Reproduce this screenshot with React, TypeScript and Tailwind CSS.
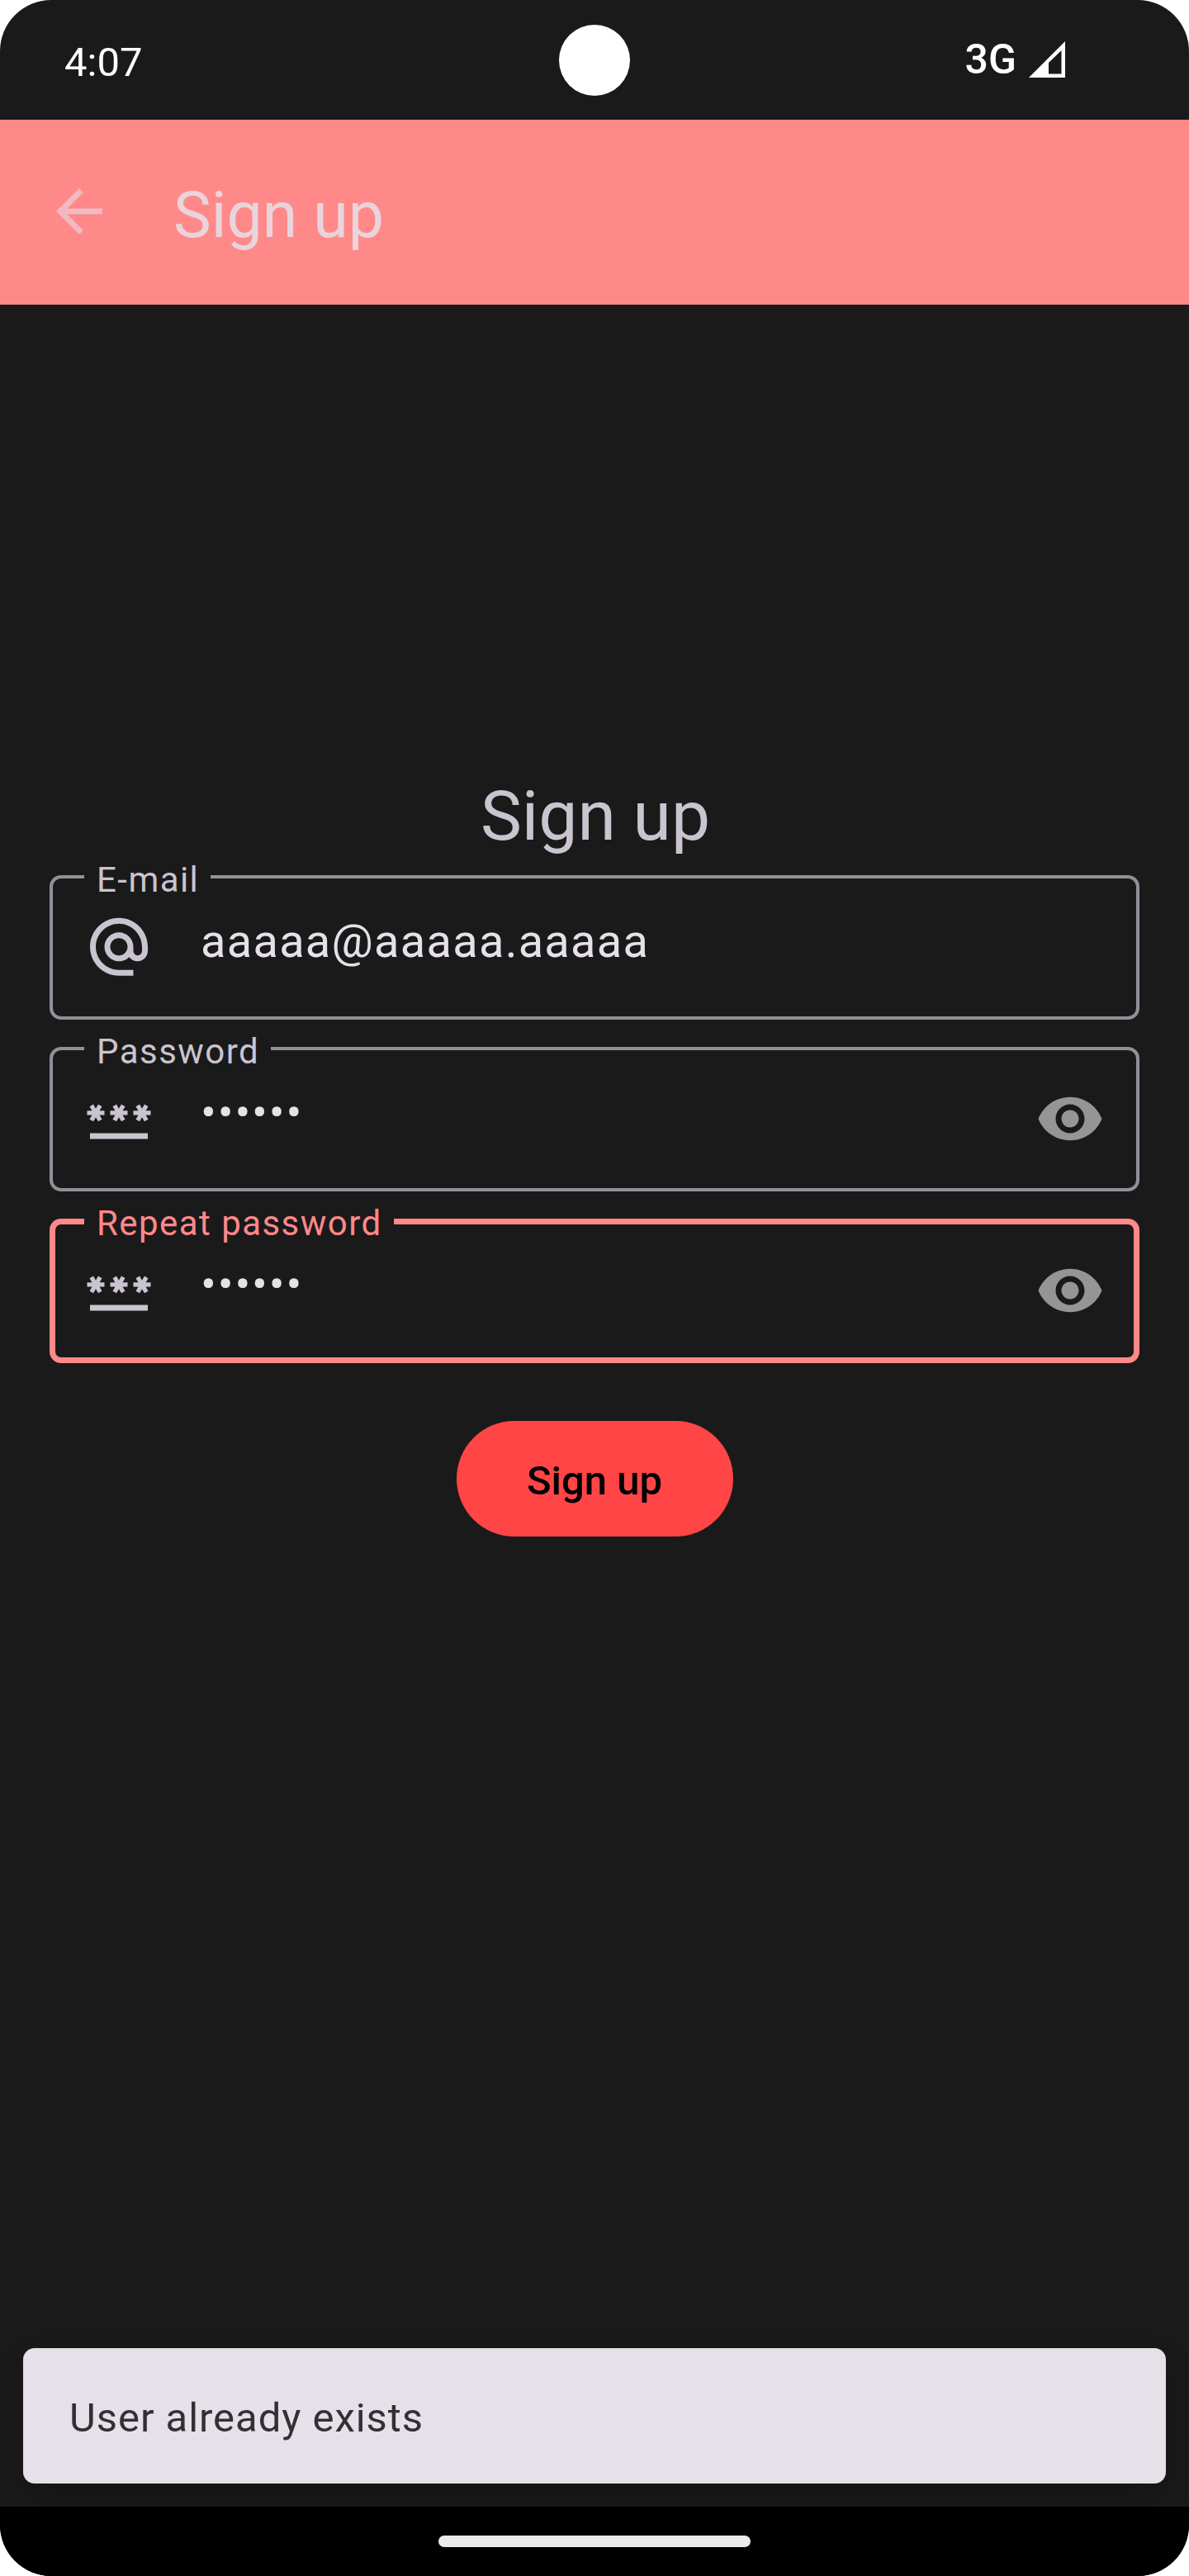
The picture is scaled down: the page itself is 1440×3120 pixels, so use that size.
import React from "react";

const AT_PATH =
  "M12 1.95c-5.52 0-10 4.48-10 10s4.48 10 10 10h5v-2h-5c-4.34 0-8-3.66-8-8s3.66-8 8-8 8 3.66 8 8v1.43c0 .79-.71 1.57-1.5 1.57s-1.5-.78-1.5-1.57v-1.43c0-2.76-2.24-5-5-5s-5 2.24-5 5 2.24 5 5 5c1.38 0 2.64-.56 3.54-1.47.65.89 1.77 1.47 2.96 1.47 1.97 0 3.5-1.6 3.5-3.57v-1.43c0-5.52-4.48-10-10-10zm0 13c-1.66 0-3-1.34-3-3s1.34-3 3-3 3 1.34 3 3-1.34 3-3 3z";
const PASSWORD_PATH =
  "M2 17h20v2H2v-2zm1.15-4.05L4 11.47l.85 1.48 1.3-.75-.85-1.48H7v-1.5H5.3l.85-1.47L4.85 7 4 8.47 3.15 7l-1.3.75.85 1.47H1v1.5h1.7l-.85 1.48 1.3.75zm6.7-.75 1.3.75.85-1.48.85 1.48 1.3-.75-.85-1.48H15v-1.5h-1.7l.85-1.47-1.3-.75L12 8.47 11.15 7l-1.3.75.85 1.47H9v1.5h1.7l-.85 1.48zM23 9.22h-1.7l.85-1.47-1.3-.75L20 8.47 19.15 7l-1.3.75.85 1.47H17v1.5h1.7l-.85 1.48 1.3.75.85-1.48.85 1.48 1.3-.75-.85-1.48H23v-1.5z";
const EYE_PATH =
  "M12 4.5C7 4.5 2.73 7.61 1 12c1.73 4.39 6 7.5 11 7.5s9.27-3.11 11-7.5c-1.73-4.39-6-7.5-11-7.5zM12 17c-2.76 0-5-2.24-5-5s2.24-5 5-5 5 2.24 5 5-2.24 5-5 5zm0-8c-1.66 0-3 1.34-3 3s1.34 3 3 3 3-1.34 3-3-1.34-3-3-3z";
const BACK_PATH = "M20 11H7.83l5.59-5.59L12 4l-8 8 8 8 1.41-1.41L7.83 13H20v-2z";

function Icon({ path, className }: { path: string; className: string }) {
  return (
    <svg viewBox="0 0 24 24" fill="currentColor" className={`size-[84px] shrink-0 ${className}`}>
      <path d={path} />
    </svg>
  );
}

type FieldProps = {
  label: string;
  value: string;
  icon: string;
  secret?: boolean;
  focused?: boolean;
};

function Field({ label, value, icon, secret, focused }: FieldProps) {
  return (
    <div
      className={`relative flex h-[175px] w-full items-center rounded-[14px] px-[42px] ring-inset ${
        focused ? "ring-[7px] ring-[#ff8989]" : "ring-4 ring-[#938f99]"
      }`}
    >
      <span
        className={`absolute -top-[15px] left-[42px] bg-[#1a1a1a] pr-[14px] pl-[15px] text-[42px] leading-[42px] tracking-[1.45px] whitespace-nowrap ${
          focused ? "text-[#ff8989]" : "text-[#cac4d0]"
        }`}
      >
        {label}
      </span>
      <Icon path={icon} className="mb-px text-[#cac4d0]" />
      <span
        className={`mb-[16px] ml-[57px] grow text-[56px] leading-[84px] text-[#e6e0e9] ${
          secret ? "tracking-[1.8px]" : "tracking-[1.25px]"
        }`}
      >
        {value}
      </span>
      {secret && <Icon path={EYE_PATH} className="mb-px text-[#959595]" />}
    </div>
  );
}

export default function App() {
  return (
    <div className="h-[3120px] w-[1440px] bg-white font-['Roboto',sans-serif]">
      <div className="flex h-full flex-col overflow-hidden rounded-[62px] bg-[#1a1a1a]">
        <div className="grid h-[145px] shrink-0 grid-cols-3 items-center text-white">
          <span className="pt-[6px] pl-[78px] text-[49px] leading-[56px]">4:07</span>
          <span className="size-[86px] justify-self-center rounded-full bg-white" />
          <div className="flex items-center justify-end pr-[150px]">
            <span className="mb-[2px] text-[50px] leading-[56px] font-medium">3G</span>
            <svg viewBox="0 0 44 44" fill="#fff" className="mb-px ml-[15px] size-[44px]">
              <path fillRule="evenodd" d="M0 44 44 0V44ZM24 26V39.5H39.5V11Z" />
            </svg>
          </div>
        </div>

        <header className="flex h-[224px] shrink-0 items-center bg-[#ff8989] pl-[54px]">
          <Icon path={BACK_PATH} className="mb-[3px] text-[#f1b9c1]" />
          <h1 className="mt-[8px] ml-[72px] text-[77px] leading-[98px] text-[#e9d4dc]">Sign up</h1>
        </header>

        <main className="flex grow flex-col items-center px-[60px] pt-[571px]">
          <h2 className="pl-[2px] text-[84px] leading-[98px] text-[#cac4d0]">Sign up</h2>
          <div className="mt-[22px] flex w-full flex-col gap-[33px]">
            <Field label="E-mail" value="aaaaa@aaaaa.aaaaa" icon={AT_PATH} />
            <Field label="Password" value="••••••" icon={PASSWORD_PATH} secret />
            <Field label="Repeat password" value="••••••" icon={PASSWORD_PATH} secret focused />
          </div>
          <button className="mt-[70px] flex h-[140px] w-[335px] items-center justify-center rounded-full bg-[#ff4545] pt-[5px] text-[49px] leading-[70px] font-medium text-black">
            Sign up
          </button>
        </main>

        <div className="mx-[28px] mb-[28px] flex h-[164px] shrink-0 items-center rounded-[14px] bg-[#e6e0e9] pt-[5px] pl-[56px] text-[49px] leading-[70px] tracking-[0.95px] text-[#322f35] shadow-[0_14px_32px_rgba(0,0,0,0.22)]">
          User already exists
        </div>

        <nav className="z-10 flex h-[84px] shrink-0 justify-center bg-black pt-[35px]">
          <span className="h-[14px] w-[378px] rounded-full bg-[#ebebeb]" />
        </nav>
      </div>
    </div>
  );
}
